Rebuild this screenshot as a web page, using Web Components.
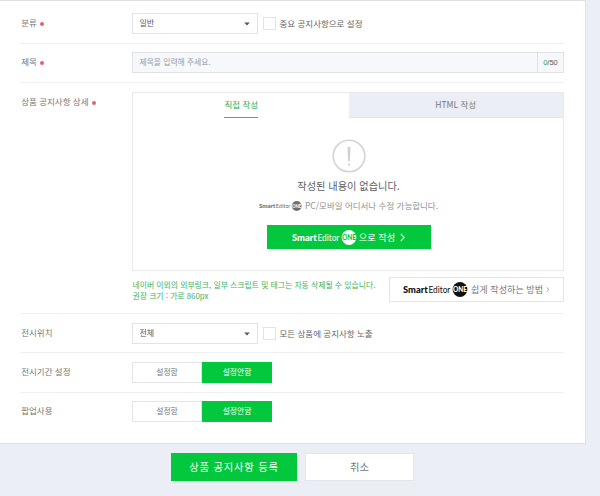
<!DOCTYPE html>
<html lang="ko">
<head>
<meta charset="utf-8">
<title>상품 공지사항 등록</title>
<style>
    html, body {
        margin: 0;
        padding: 0;
        height: 100%;
        overflow: hidden;
    }

    body {
        background: #ebeef4;
        color: #777;
        font-family: "Noto Sans CJK KR", sans-serif;
        font-size: 8.5px;
        line-height: 12px;
    }
</style>
</head>
<body>
<notice-page></notice-page>

<script>
class FormRow extends HTMLElement {

    constructor() {
        super();
        this.shadowDOM = this.attachShadow({mode: "open"});
    }

    connectedCallback(){
        this.render();
    }

    render() {
        const dot = this.hasAttribute("required") ? "<i></i>" : "";
        this.shadowDOM.innerHTML = `
        <style>
            :host {
                display: flex;
                box-sizing: border-box;
                margin: 0 21px 0 20px;
                border-bottom: 1px solid #f0f0f1;
            }

            :host([last]) {
                border-bottom: none;
            }

            .label {
                flex: 0 0 112px;
                box-sizing: border-box;
                padding: 3px 0 0 1.2px;
                white-space: nowrap;
            }

            i {
                display: inline-block;
                width: 4px;
                height: 4px;
                margin-left: 3px;
                border-radius: 50%;
                background: #e2626f;
                vertical-align: 0;
            }

            .field {
                flex: 1;
                min-width: 0;
                display: flex;
                align-items: flex-start;
            }
        </style>
        <div class="label">${this.getAttribute("label")}${dot}</div>
        <div class="field"><slot></slot></div>`;
    }
}

class SelectBox extends HTMLElement {

    constructor() {
        super();
        this.shadowDOM = this.attachShadow({mode: "open"});
    }

    connectedCallback(){
        this.shadowDOM.innerHTML = `
        <style>
            :host {
                display: flex;
                align-items: center;
                justify-content: space-between;
                box-sizing: border-box;
                width: 126px;
                height: 21px;
                padding: 0 7px 0 6.5px;
                border: 1px solid #e2e3e5;
                background: #fff;
                color: #555;
                font-size: 8px;
            }

            span {
                padding-bottom: 1px;
            }
        </style>
        <span><slot></slot></span>
        <svg width="6" height="4" viewBox="0 0 6 4"><path d="M.2 .4h5.6L3 3.6z" fill="#555"/></svg>`;
    }
}

class CheckBox extends HTMLElement {

    constructor() {
        super();
        this.shadowDOM = this.attachShadow({mode: "open"});
    }

    connectedCallback(){
        this.shadowDOM.innerHTML = `
        <style>
            :host {
                display: flex;
                align-items: center;
                height: 21px;
                margin-left: 5px;
                color: #666;
                white-space: nowrap;
            }

            .box {
                box-sizing: border-box;
                width: 13px;
                height: 13px;
                margin-right: 3.5px;
                border: 1px solid #e2e3e5;
                background: #fff;
            }

            .text {
                padding-bottom: 2px;
            }
        </style>
        <span class="box"></span><span class="text"><slot></slot></span>`;
    }
}

class TitleInput extends HTMLElement {

    constructor() {
        super();
        this.shadowDOM = this.attachShadow({mode: "open"});
    }

    connectedCallback(){
        this.shadowDOM.innerHTML = `
        <style>
            :host {
                flex: 1;
                display: flex;
                box-sizing: border-box;
                height: 21px;
                border: 1px solid #e0e2e6;
                background: #f7f8fc;
                font-size: 7.8px;
                line-height: 18px;
            }

            .text {
                flex: 1;
                padding-left: 6.5px;
                color: #989ba1;
            }

            .count {
                box-sizing: border-box;
                width: 26px;
                border-left: 1px solid #e0e2e6;
                color: #555;
                text-align: center;
                font-family: "Liberation Sans", sans-serif;
                font-size: 7.5px;
                line-height: 19px;
            }

            b {
                color: #22ad4c;
                font-weight: normal;
            }
        </style>
        <div class="text"><slot></slot></div>
        <div class="count"><b>0</b>/50</div>`;
    }
}

class SmartLogo extends HTMLElement {

    constructor() {
        super();
        this.shadowDOM = this.attachShadow({mode: "open"});
    }

    connectedCallback(){
        this.shadowDOM.innerHTML = `
        <style>
            :host {
                display: block;
                width: 65px;
                height: 15px;
                color: #111;
                --hole: #fff;
            }

            svg {
                display: block;
                width: 100%;
                height: 100%;
                overflow: visible;
            }

            text {
                font-family: Lato, sans-serif;
                font-size: 9px;
                fill: currentColor;
            }

            .one {
                font-size: 6.2px;
                font-weight: 900;
                fill: var(--hole);
            }
        </style>
        <svg viewBox="0 0 65 15">
            <text x="0" y="10.8" font-weight="900" textLength="24.8" lengthAdjust="spacingAndGlyphs">Smart</text>
            <text x="25.4" y="10.8" textLength="22" lengthAdjust="spacingAndGlyphs">Editor</text>
            <circle cx="57" cy="7.5" r="7.4" fill="currentColor"/>
            <text class="one" transform="translate(50 10.2) scale(1 1.25)" textLength="14" lengthAdjust="spacingAndGlyphs">ONE</text>
        </svg>`;
    }
}

class EditorBox extends HTMLElement {

    constructor() {
        super();
        this.shadowDOM = this.attachShadow({mode: "open"});
    }

    connectedCallback(){
        this.shadowDOM.innerHTML = `
        <style>
            :host {
                display: flex;
                flex-direction: column;
                flex: 1;
                white-space: nowrap;
            }

            .frame {
                display: flex;
                flex-direction: column;
                align-items: center;
                box-sizing: border-box;
                height: 179px;
                padding-left: 1px;
                border: 1px solid #e9eaec;
            }

            .tabs {
                display: flex;
                align-self: stretch;
                height: 25px;
                line-height: 23px;
                text-align: center;
            }

            .tab {
                flex: 1;
            }

            .tab span {
                display: inline-block;
                height: 24px;
                border-bottom: 1px solid #3bb566;
                color: #22ad4c;
            }

            .tab.off {
                box-sizing: border-box;
                border-bottom: 1px solid #e1e4e9;
                background: #ebeef4;
            }

            .icon {
                display: block;
                margin-top: 21px;
            }

            .empty {
                margin-top: 5px;
                color: #606060;
                font-size: 10.2px;
                line-height: 15px;
            }

            .guide {
                display: flex;
                align-items: center;
                margin-top: 6px;
                color: #929292;
                font-size: 8.5px;
                line-height: 12px;
            }

            .guide smart-logo {
                width: 43px;
                height: 10px;
                margin-right: 3px;
                color: #707070;
            }

            .write {
                display: flex;
                align-items: center;
                justify-content: center;
                width: 164px;
                height: 24px;
                margin-top: 12px;
                background: #03c73c;
                color: #fff;
                font-size: 9.2px;
            }

            .write smart-logo {
                color: #fff;
                --hole: #03c73c;
                margin-right: 2px;
            }

            .write svg {
                margin-left: 5px;
            }

            .bottom {
                display: flex;
                justify-content: space-between;
                margin-top: 6px;
            }

            .help {
                margin-top: 2px;
                padding-left: .5px;
                color: #3bb363;
                font-size: 7.85px;
                line-height: 11px;
            }

            .how {
                display: flex;
                align-items: center;
                box-sizing: border-box;
                width: 175px;
                height: 25px;
                padding-left: 13px;
                border: 1px solid #e4e4e6;
                color: #777;
                font-size: 9.1px;
            }

            .how smart-logo {
                margin-right: 3px;
            }

            .how svg {
                margin-left: 3px;
            }

            .lift {
                padding-bottom: 2px;
            }
        </style>
        <div class="frame">
            <div class="tabs">
                <div class="tab"><span>직접 작성</span></div>
                <div class="tab off">HTML 작성</div>
            </div>
            <svg class="icon" width="34" height="34" viewBox="0 0 34 34">
                <circle cx="17" cy="17" r="15.8" fill="none" stroke="#d2d3d6" stroke-width="1.6"/>
                <path d="M15.5 8h3l-.7 14.5h-1.6z" fill="#cfd0d4"/>
                <circle cx="17" cy="25.7" r="1.1" fill="#cfd0d4"/>
            </svg>
            <div class="empty">작성된 내용이 없습니다.</div>
            <div class="guide"><smart-logo></smart-logo><span class="lift">PC/모바일 어디서나 수정 가능합니다.</span></div>
            <div class="write">
                <smart-logo></smart-logo><span>으로 작성</span>
                <svg width="5" height="9" viewBox="0 0 5 9"><path d="M.8 .8l3.4 3.7L.8 8.2" fill="none" stroke="#fff" stroke-width="1.1"/></svg>
            </div>
        </div>
        <div class="bottom">
            <div class="help">네이버 이외의 외부링크, 일부 스크립트 및 태그는 자동 삭제될 수 있습니다.<br>권장 크기 : 가로 860px</div>
            <div class="how">
                <smart-logo></smart-logo><span class="lift">쉽게 작성하는 방법</span>
                <svg width="4" height="5" viewBox="0 0 4 5"><path d="M.7 .4l2.2 2.1L.7 4.6" fill="none" stroke="#888" stroke-width=".8"/></svg>
            </div>
        </div>`;
    }
}

class ToggleButtons extends HTMLElement {

    constructor() {
        super();
        this.shadowDOM = this.attachShadow({mode: "open"});
    }

    connectedCallback(){
        this.shadowDOM.innerHTML = `
        <style>
            :host {
                display: flex;
                width: 140px;
                height: 21px;
                font-size: 7.8px;
                line-height: 18px;
                text-align: center;
            }

            div {
                flex: 1;
                box-sizing: border-box;
                border: 1px solid #e4e4e6;
            }

            div:first-child {
                border-right: none;
            }

            .on {
                border-color: #03c73c;
                background: #03c73c;
                color: #fff;
            }
        </style>
        <div>설정함</div>
        <div class="on">설정안함</div>`;
    }
}

class NoticePage extends HTMLElement {

    constructor() {
        super();
        this.shadowDOM = this.attachShadow({mode: "open"});
    }

    connectedCallback(){
        this.render();
    }

    render() {
        this.shadowDOM.innerHTML = `
        <style>
            :host {
                display: block;
            }

            .panel {
                box-sizing: border-box;
                width: 586px;
                height: 444px;
                border: 1px solid #dfe1e6;
                border-left: none;
                background: #fff;
            }

            .kind {
                height: 43px;
                padding-top: 12px;
            }

            .title {
                height: 39px;
                padding-top: 8px;
            }

            .detail {
                height: 231px;
                padding-top: 9px;
            }

            .place {
                height: 39px;
                padding-top: 9px;
            }

            .period {
                height: 40px;
                padding-top: 9px;
            }

            .popup {
                height: 50px;
                padding-top: 8px;
            }

            .actions {
                display: flex;
                justify-content: center;
                gap: 8px;
                width: 585px;
                margin-top: 9px;
                font-size: 10.3px;
                line-height: 27px;
                text-align: center;
            }

            .actions div {
                box-sizing: border-box;
                height: 28px;
            }

            .save {
                width: 126px;
                background: #03c73c;
                color: #fff;
                letter-spacing: .8px;
            }

            .cancel {
                width: 109px;
                border: 1px solid #e3e6eb;
                background: #fff;
                line-height: 25px;
            }
        </style>
        <div class="panel">
            <form-row class="kind" label="분류" required>
                <select-box>일반</select-box>
                <check-box>중요 공지사항으로 설정</check-box>
            </form-row>
            <form-row class="title" label="제목" required>
                <title-input>제목을 입력해 주세요.</title-input>
            </form-row>
            <form-row class="detail" label="상품 공지사항 상세" required>
                <editor-box></editor-box>
            </form-row>
            <form-row class="place" label="전시위치">
                <select-box>전체</select-box>
                <check-box>모든 상품에 공지사항 노출</check-box>
            </form-row>
            <form-row class="period" label="전시기간 설정">
                <toggle-buttons></toggle-buttons>
            </form-row>
            <form-row class="popup" label="팝업사용" last>
                <toggle-buttons></toggle-buttons>
            </form-row>
        </div>
        <div class="actions">
            <div class="save">상품 공지사항 등록</div>
            <div class="cancel">취소</div>
        </div>`;
    }
}

customElements.define("form-row", FormRow);
customElements.define("select-box", SelectBox);
customElements.define("check-box", CheckBox);
customElements.define("title-input", TitleInput);
customElements.define("smart-logo", SmartLogo);
customElements.define("editor-box", EditorBox);
customElements.define("toggle-buttons", ToggleButtons);
customElements.define("notice-page", NoticePage);
</script>
</body>
</html>
